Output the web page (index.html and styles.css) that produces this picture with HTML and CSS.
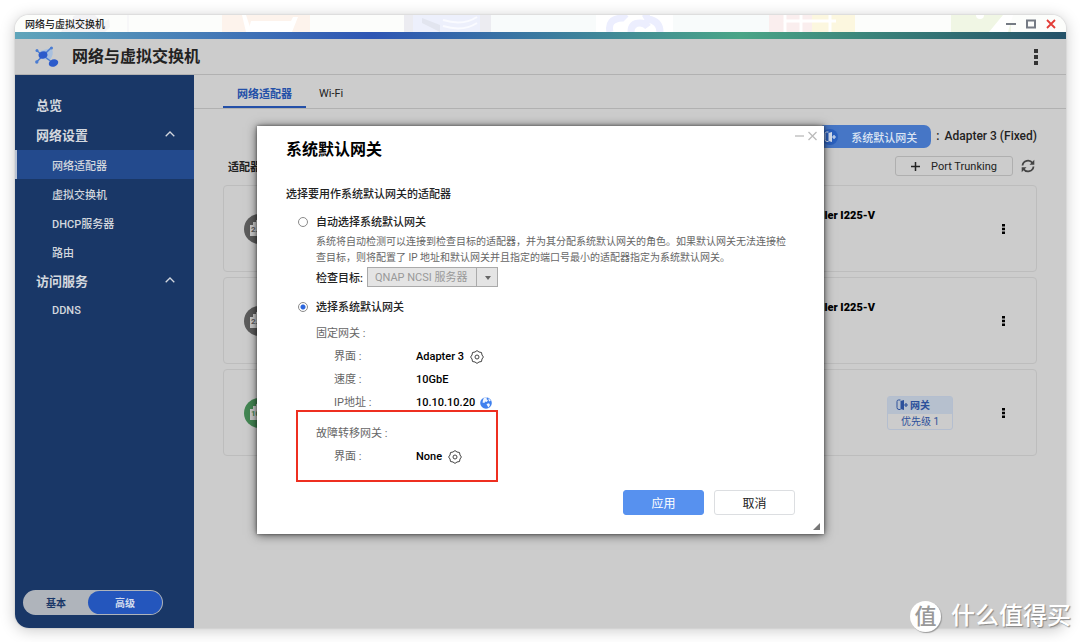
FILE: index.html
```html
<!DOCTYPE html>
<html lang="zh-CN">
<head>
<meta charset="utf-8">
<meta name="viewport" content="width=device-width, initial-scale=1">
<title>网络与虚拟交换机</title>
<link rel="stylesheet" href="styles.css">
</head>
<body>
<svg class="symbols" width="0" height="0" aria-hidden="true">
  <symbol id="dots" viewBox="0 0 4 16"><path d="M0 0h4v4H0zM0 6h4v4H0zM0 12h4v4H0z" fill="currentColor"/></symbol>
  <symbol id="gateway" viewBox="0 0 12 12"><path d="M4.500 1H2.500Q1 1 1 2.500V8.500Q1 10.500 3 10.500H4.500" fill="none" stroke="currentColor" stroke-width="1"/><path d="M4.500 2 8 1v10L4.500 10z" fill="currentColor"/><path d="M8 6h4M10 4v4" stroke="currentColor" stroke-width="1.200"/></symbol>
  <symbol id="gear" viewBox="0 0 14 14"><path d="M7 .6 9 2 11.500 2.500 12 5 13.400 7 12 9 11.500 11.500 9 12 7 13.400 5 12 2.500 11.500 2 9 .6 7 2 5 2.500 2.500 5 2z" fill="none" stroke="currentColor" stroke-width="1" stroke-linejoin="round"/><circle cx="7" cy="7" r="2" fill="none" stroke="currentColor"/></symbol>
  <symbol id="chevron" viewBox="0 0 10 6"><path d="M.7 5.300 5 1l4.300 4.300" fill="none" stroke="currentColor" stroke-width="1.300"/></symbol>
  <symbol id="port" viewBox="0 0 30 30"><circle cx="15" cy="15" r="15" fill="currentColor"/><path d="M6 22V11h3V8h3V6h6v2h3v3h3v11z" fill="#ccc"/></symbol>
</svg>

<div class="window">
  <header class="titlebar">
    <svg class="backdrop" viewBox="0 0 1051 17" preserveAspectRatio="none" aria-hidden="true">
      <path d="M46 17q4-9 8-4l5-8q-4-5 5-5h16l8 8 6-4 1 8-5 5z" fill="#f3f3f5"/>
      <path d="M112 0h2v17h-2z" fill="#f7f7f8"/>
      <path d="M207 0h88v17h-88z" fill="#fdf3ec"/><path d="M227 0h4l4 12v5h-4z" fill="#fff"/><path d="m233 17 3-11h40l2-4h5l-6 15z" fill="#fff"/>
      <path d="M389 0h87v17h-87z" fill="#ececf1"/><path d="M398 0h67v17h-67z" fill="#edf0fc"/><path d="M407 3 425 10v7l-18-9z" fill="#e2e5ef"/><path d="M428 5q20 6 34-3M428 11q20 6 34-3" fill="none" stroke="#fafbff" stroke-width="2"/>
      <path d="M476 0h105v17H476zM658 0h96v17h-96z" fill="#f8fbfb"/>
      <path d="M581 0h77v17h-77z" fill="#fff"/>
      <path d="M595 17q-3-13 12-14l4-4M630-1l3 5q12 2 12 13M616 17q0-9 9-9 5 0 8 4" fill="none" stroke="#eceefe" stroke-width="7"/>
      <path d="M754 0h43v17h-43z" fill="#faeeee"/><path d="M797 0h43v17h-43z" fill="#fcf7df"/><path d="M770 0v17M786 0v17M815 0v17M769 6h52" stroke="#fff" stroke-width="3"/>
      <path d="M936 0h60v17h-60z" fill="#f0f6e4"/><path d="m974 17 14-17h10l-5 17z" fill="#fff"/><circle cx="965" r="4" fill="#fff"/>
    </svg>
    <span class="titlebar-text">网络与虚拟交换机</span>
    <div class="window-controls">
      <button type="button" aria-label="最小化"><svg width="10" height="10" viewBox="0 0 10 10"><path d="M0 5h10" stroke="#757b84" stroke-width="2"/></svg></button>
      <button type="button" aria-label="最大化"><svg width="10" height="10" viewBox="0 0 10 10"><path d="M1 1.500h8v7H1z" fill="none" stroke="#757b84" stroke-width="2"/></svg></button>
      <button type="button" aria-label="关闭"><svg width="10" height="10" viewBox="0 0 10 10"><path d="m1 1 8 8M9 1 1 9" stroke="#e23c36" stroke-width="1.800"/></svg></button>
    </div>
  </header>
  <div class="accent"></div>
  <div class="app-header">
    <svg class="logo" width="24" height="22" viewBox="0 0 24 22" aria-hidden="true">
      <path d="M5 5 16 2q4 5-1 12l-8-1z" fill="#a9c0de"/>
      <path d="m1.500 16 15-14.500M1.500 4.500 18 17" stroke="#4a7cd2" stroke-width="1.500"/>
      <circle cx="2" cy="4.500" r="1.500" fill="#4a7cd2"/><circle cx="1.800" cy="16" r="1.700" fill="#4a7cd2"/><circle cx="16.500" cy="2" r="1.500" fill="#4a7cd2"/>
      <ellipse cx="8" cy="9" rx="4.500" ry="3.600" transform="rotate(-20 8 9)" fill="#2c5bcb"/><ellipse cx="18.500" cy="17" rx="4.800" ry="3.600" transform="rotate(-20 18.500 17)" fill="#2c5bcb"/>
    </svg>
    <h1>网络与虚拟交换机</h1>
    <button type="button" class="menu-button" aria-label="菜单"><svg width="4" height="16"><use href="#dots"/></svg></button>
  </div>

  <div class="workspace">
    <aside class="sidebar">
      <nav>
        <a href="#" class="nav-head">总览</a>
        <a href="#" class="nav-head">网络设置<svg width="10" height="6"><use href="#chevron"/></svg></a>
        <a href="#" class="nav-item current">网络适配器</a>
        <a href="#" class="nav-item">虚拟交换机</a>
        <a href="#" class="nav-item">DHCP服务器</a>
        <a href="#" class="nav-item">路由</a>
        <a href="#" class="nav-head">访问服务<svg width="10" height="6"><use href="#chevron"/></svg></a>
        <a href="#" class="nav-item">DDNS</a>
      </nav>
      <div class="mode-switch">
        <button type="button">基本</button>
        <button type="button" class="on">高级</button>
      </div>
    </aside>

    <main class="content">
      <div class="tabs">
        <button type="button" class="tab selected">网络适配器</button>
        <button type="button" class="tab">Wi-Fi</button>
      </div>
      <div class="panel">
        <div class="gateway-row">
          <button type="button" class="gateway-button"><span class="gateway-icon"><svg width="12" height="12"><use href="#gateway"/></svg></span>系统默认网关</button>
          <span class="colon">:</span><strong>Adapter 3 (Fixed)</strong>
        </div>
        <div class="tool-row">
          <h2>适配器</h2>
          <button type="button" class="trunk-button"><svg width="9" height="9" viewBox="0 0 9 9"><path d="M4.500 0v9M0 4.500h9" stroke="#222" stroke-width="1.500"/></svg>Port Trunking</button>
          <button type="button" class="refresh" aria-label="刷新"><svg width="14" height="14" viewBox="0 0 14 14"><path d="M1.500 6.500A5.500 5.500 0 0 1 11.500 4M12.500 7.500A5.500 5.500 0 0 1 2.500 10" fill="none" stroke="#444" stroke-width="1.800"/><path d="M13.300.8v5H8.500zM.7 13.200v-5h4.800z" fill="#444"/></svg></button>
        </div>
        <ul class="cards">
          <li class="card">
            <span class="port"><svg width="30" height="30"><use href="#port"/></svg><span>2.5G</span></span>
            <strong class="adapter">Controller I225-V</strong>
            <button type="button" class="card-menu" aria-label="更多"><svg width="3" height="10" viewBox="0 0 4 16" preserveAspectRatio="none"><use href="#dots"/></svg></button>
          </li>
          <li class="card">
            <span class="port"><svg width="30" height="30"><use href="#port"/></svg><span>2.5G</span></span>
            <strong class="adapter">Controller I225-V</strong>
            <button type="button" class="card-menu" aria-label="更多"><svg width="3" height="10" viewBox="0 0 4 16" preserveAspectRatio="none"><use href="#dots"/></svg></button>
          </li>
          <li class="card">
            <span class="port up"><svg width="30" height="30"><use href="#port"/></svg><span>10G</span></span>
            <span class="adapter"></span>
            <div class="badge">
              <div class="badge-title"><svg width="12" height="12"><use href="#gateway"/></svg>网关</div>
              <div class="badge-text">优先级 1</div>
            </div>
            <button type="button" class="card-menu" aria-label="更多"><svg width="3" height="10" viewBox="0 0 4 16" preserveAspectRatio="none"><use href="#dots"/></svg></button>
          </li>
        </ul>
      </div>
    </main>
  </div>

  <form class="dialog" role="dialog" aria-labelledby="dialog-title">
    <div class="dialog-controls">
      <button type="button" aria-label="最小化"><svg width="9" height="10" viewBox="0 0 9 10"><path d="M0 5h9" stroke="#c3c3c3" stroke-width="1.500"/></svg></button>
      <button type="button" aria-label="关闭"><svg width="9" height="10" viewBox="0 0 9 10"><path d="m.5 1 8 8M8.500 1l-8 8" stroke="#bbb" stroke-width="1.300"/></svg></button>
    </div>
    <h2 id="dialog-title">系统默认网关</h2>
    <p class="prompt">选择要用作系统默认网关的适配器</p>

    <label class="choice"><input type="radio" name="mode">自动选择系统默认网关</label>
    <div class="option">
      <p class="description">系统将自动检测可以连接到检查目标的适配器，并为其分配系统默认网关的角色。如果默认网关无法连接检<br>查目标，则将配置了 IP 地址和默认网关并且指定的端口号最小的适配器指定为系统默认网关。</p>
      <div class="target">
        <label for="target">检查目标:</label>
        <span class="select"><select id="target" disabled><option>QNAP NCSI 服务器</option></select></span>
      </div>
    </div>

    <label class="choice second"><input type="radio" name="mode" checked>选择系统默认网关</label>
    <div class="option">
      <div class="group">
        <p class="group-title">固定网关 :</p>
        <dl>
          <dt>界面 :</dt><dd>Adapter 3<button type="button" aria-label="设置"><svg width="14" height="14"><use href="#gear"/></svg></button></dd>
          <dt>速度 :</dt><dd>10GbE</dd>
          <dt>IP地址 :</dt><dd class="tight">10.10.10.20<svg width="12" height="12" viewBox="0 0 12 12" aria-hidden="true"><circle cx="6" cy="6" r="5.800" fill="#3f80ee"/><path d="M4 .6 7 .3l-.5 1.800L8 3.500 6.500 5 5 4.500 4.500 6 2.500 5.500 3 3zM8.500 1.200l2.300 2.300-1.300 1-1-1.500zM6.500 7l2.500-.8L10 8l-1.500 2.500L7.500 9z" fill="#f1f6fe"/></svg></dd>
        </dl>
      </div>
      <div class="group failover">
        <p class="group-title">故障转移网关 :</p>
        <dl>
          <dt>界面 :</dt><dd>None<button type="button" aria-label="设置"><svg width="14" height="14"><use href="#gear"/></svg></button></dd>
        </dl>
        <span class="highlight"></span>
      </div>
    </div>

    <div class="actions">
      <button type="submit" class="primary">应用</button>
      <button type="button">取消</button>
    </div>
    <svg class="resize" width="7" height="7" viewBox="0 0 7 7" aria-hidden="true"><path d="M7 0v7H0z" fill="#777"/></svg>
  </form>
</div>

<div class="watermark"><span class="seal">值</span><span>什么值得买</span></div>
</body>
</html>
```
FILE: styles.css
```css
* { box-sizing: border-box; }

body {
  margin: 0;
  min-height: 100vh;
  padding: 15px 14px 14px 15px;
  display: flex;
  background: #fff;
  color: #222;
  font-family: Roboto, "Noto Sans CJK SC", sans-serif;
  font-size: 11px;
}

h1, h2, p, ul, dl, dd { margin: 0; padding: 0; }
button, select { font: inherit; color: inherit; }
button { padding: 0; border: 0; background: none; cursor: pointer; }
a { color: inherit; text-decoration: none; }
svg { display: block; flex: none; }
.symbols { position: absolute; }

.window {
  position: relative;
  flex: 1;
  display: flex;
  flex-direction: column;
  border-radius: 14px;
  box-shadow: 0 0 2px rgba(0, 0, 0, .2), 0 2px 15px rgba(0, 0, 0, .22);
}

/* Title bar */
.titlebar {
  position: relative;
  display: flex;
  align-items: center;
  justify-content: space-between;
  height: 17px;
  padding: 0 10px;
  border-radius: 14px 14px 0 0;
  overflow: hidden;
  background: #fcfdfb;
}
.backdrop { position: absolute; inset: 0; width: 100%; height: 100%; }
.titlebar-text { position: relative; font-size: 10px; font-weight: 500; }
.window-controls { position: relative; display: flex; gap: 10px; padding-top: 1px; }
.accent {
  height: 7px;
  background: linear-gradient(90deg, #5fa5ba, #2e56b4 34%, #4aa587 69%, #245168);
}

.app-header {
  display: flex;
  align-items: center;
  height: 36px;
  padding: 0 28px 0 20px;
  border-bottom: 1px solid #b1b1b1;
  background: #ccc;
}
.app-header h1 { margin-left: 13px; font-size: 16px; font-weight: 700; line-height: 24px; }
.menu-button { margin-left: auto; color: #333; }

.workspace { flex: 1; display: flex; }

/* Sidebar */
.sidebar {
  width: 179px;
  display: flex;
  flex-direction: column;
  justify-content: space-between;
  padding: 15px 0 13px;
  border-radius: 0 0 0 14px;
  background: #193767;
  color: #d3d7de;
}
.nav-head {
  display: flex;
  align-items: center;
  justify-content: space-between;
  height: 30px;
  padding: 0 19px 2px 21px;
  font-size: 13px;
  font-weight: 700;
}
.nav-item {
  display: flex;
  align-items: center;
  height: 29px;
  padding-left: 37px;
  font-size: 11px;
  font-weight: 500;
}
.current { background: #234a8d; box-shadow: inset 2px 0 #b9c3d4; }
.mode-switch {
  display: flex;
  width: 140px;
  height: 25px;
  margin-left: 8px;
  padding: 1px;
  border-radius: 13px;
  background: #afb4bb;
  color: #193767;
  font-size: 10px;
  font-weight: 700;
}
.mode-switch button { flex: 1; }
.mode-switch .on { flex: none; width: 74px; border-radius: 12px; background: #2456bd; color: #d3dcee; }

/* Content */
.content {
  flex: 1;
  min-width: 0;
  border-radius: 0 0 14px 0;
  background: #ccc;
}
.tabs {
  display: flex;
  height: 34px;
  padding-left: 29px;
  border-bottom: 1px solid #b1b1b1;
}
.tab { padding: 5px 13px 0; border-bottom: 2px solid transparent; }
.selected { border-color: #2450a8; color: #2450a8; font-weight: 700; width: 83px; }
.panel { padding: 16px 29px 24px; }

.gateway-row {
  display: flex;
  align-items: center;
  justify-content: flex-end;
  height: 23px;
  font-size: 12px;
}
.gateway-button {
  display: flex;
  align-items: center;
  gap: 13px;
  height: 23px;
  padding: 0 14px 0 4px;
  border-radius: 7px;
  background: #4676c6;
  color: #dbe4f3;
  font-size: 11px;
  font-weight: 500;
}
.gateway-icon { padding: 2px; border-radius: 50%; background: #2a60bf; }
.gateway-row strong { padding-bottom: 2px; font-weight: 500; }
.colon { margin: 0 5px; padding-bottom: 2px; font-weight: 500; }

.tool-row { display: flex; align-items: center; height: 20px; margin: 8px 0 9px; }
.tool-row h2 { margin: 0 auto 0 5px; font-size: 11px; font-weight: 700; }
.trunk-button {
  display: flex;
  align-items: center;
  justify-content: center;
  gap: 11px;
  width: 118px;
  height: 20px;
  border: 1px solid #afafaf;
  border-radius: 3px;
  font-size: 11px;
}
.refresh { margin: 0 2px 0 8px; }

.cards { display: grid; gap: 5px; list-style: none; }
.card {
  display: flex;
  align-items: center;
  height: 87px;
  padding: 0 28px 0 20px;
  border: 1px solid #bdbdbd;
  border-radius: 4px;
}
.port { position: relative; color: #5c5c5c; font-size: 8px; font-weight: 700; }
.port span { position: absolute; left: 7px; top: 11px; }
.up { color: #438653; }
.adapter { flex: 1; align-self: flex-start; margin: 22px 124px 0 0; text-align: right; color: #000; font-weight: 900; line-height: 16px; }
.badge {
  width: 66px;
  margin: 0 46px 0 -66px;
  border: 1px solid #b4becf;
  border-radius: 3px;
  color: #2c509b;
  font-size: 10px;
  line-height: 15px;
  text-align: center;
}
.card:has(.badge) .adapter { margin-right: 178px; }
.badge-title { display: flex; align-items: center; gap: 2px; height: 17px; padding-left: 8px; background: #b6c0ce; font-weight: 700; }
.badge-text { height: 15px; }
.card-menu { width: 9px; display: grid; justify-content: center; color: #000; }

/* Dialog */
.dialog {
  position: absolute;
  left: 242px;
  top: 111px;
  width: 567px;
  padding: 12px 29px 19px;
  background: #fff;
  box-shadow: 0 0 3px rgba(0, 0, 0, .5), 0 1px 10px rgba(0, 0, 0, .6);
}
.dialog-controls { position: absolute; right: 7px; top: 5px; display: flex; gap: 4px; }
.dialog h2 { color: #000; font-size: 16px; font-weight: 700; line-height: 24px; }
.prompt { margin-top: 24px; font-weight: 500; line-height: 18px; }
.choice {
  display: flex;
  align-items: flex-start;
  gap: 8px;
  margin: 11px 0 0 12px;
  font-weight: 500;
  line-height: 16px;
}
.second { margin-top: 13px; }
.choice input {
  appearance: none;
  width: 10px;
  height: 10px;
  margin: 2px 0 0;
  border: 1px solid #8a8a8a;
  border-radius: 50%;
  background: #fff;
}
.choice input:checked { background: radial-gradient(circle, #2c66dd 2px, #fff 3px); }
.option { margin-left: 30px; }
.description { margin-top: 3px; color: #666; font-size: 10px; line-height: 16px; white-space: nowrap; }
.target { display: flex; align-items: center; gap: 4px; margin-top: 1px; font-weight: 500; }
.select { position: relative; width: 131px; height: 20px; }
.select select {
  appearance: none;
  width: 100%;
  height: 20px;
  padding: 0 26px 0 7px;
  border: 1px solid #aaa;
  border-radius: 0;
  background: linear-gradient(90deg, transparent 108px, #aaa 108px 109px, transparent 109px) #e4e4e4;
  color: #999;
  font-weight: 400;
  opacity: 1;
}
.select::after {
  content: "";
  position: absolute;
  right: 7px;
  top: 9px;
  border: 3px solid transparent;
  border-top: 4px solid #666;
  border-bottom: 0;
}
.group { position: relative; margin-top: 6px; line-height: 23px; color: #666; }
.failover { margin-top: 8px; }
.group dl { display: grid; grid-template-columns: 82px 1fr; padding-left: 18px; }
.group dd { display: flex; align-items: center; gap: 6px; color: #000; font-weight: 500; }
.group dd button { color: #444; }
.tight svg { margin-left: -1px; }
.highlight {
  position: absolute;
  left: -20px;
  top: -12px;
  width: 202px;
  height: 72px;
  border: 2px solid #ee2f20;
  pointer-events: none;
}
.actions { display: flex; justify-content: flex-end; gap: 10px; margin-top: 22px; }
.actions button {
  width: 81px;
  height: 25px;
  border: 1px solid #dcdee1;
  border-radius: 3px;
  font-size: 12px;
}
.actions .primary { border-color: #5791ef; background: #5791ef; color: #fff; }
.resize { position: absolute; right: 4px; bottom: 4px; }

/* Watermark */
.watermark {
  position: absolute;
  right: 9px;
  bottom: 8px;
  display: flex;
  align-items: center;
  gap: 10px;
  color: #fff;
  font-size: 24px;
  font-weight: 500;
  line-height: 36px;
  text-shadow: 1px 1px 1px #888;
}
.seal {
  width: 31px;
  height: 31px;
  border-radius: 50%;
  background: #fff;
  color: #999;
  font-size: 22px;
  line-height: 31px;
  text-align: center;
  text-shadow: none;
  box-shadow: 1px 1px 1px #999;
}
```
